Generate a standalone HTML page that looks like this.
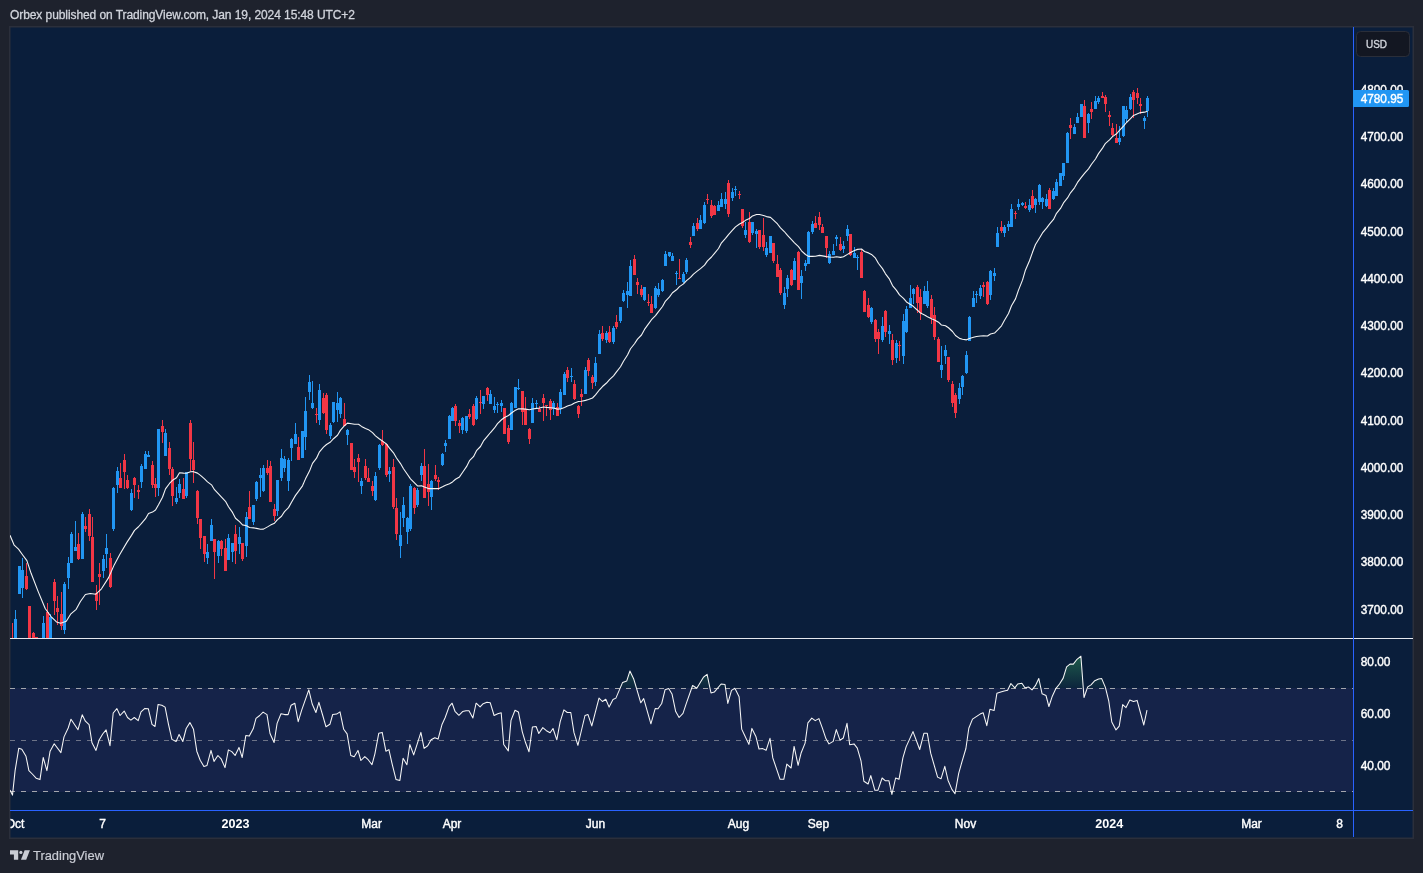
<!DOCTYPE html>
<html><head><meta charset="utf-8"><title>TradingView chart</title>
<style>
html,body{margin:0;padding:0;background:#1e222d;}
body{width:1423px;height:873px;overflow:hidden;position:relative;font-family:"Liberation Sans", sans-serif;}
#title{position:absolute;left:10px;top:8px;font-size:12px;line-height:14px;color:#d1d4dc;white-space:nowrap;letter-spacing:-0.08px;-webkit-text-stroke:0.3px #d1d4dc}
#brand{position:absolute;left:33px;top:847.6px;font-size:12.9px;line-height:16px;color:#c9ccd4;white-space:nowrap;-webkit-text-stroke:0.2px #c9ccd4}
svg{position:absolute;left:0;top:0;will-change:transform}
#title,#brand{will-change:transform}
svg text{font-family:"Liberation Sans", sans-serif;font-size:12.6px;fill:#fff;stroke:#fff;stroke-width:0.4px}
</style></head><body>
<div id="title">Orbex published on TradingView.com, Jan 19, 2024 15:48 UTC+2</div>
<svg width="1423" height="873" viewBox="0 0 1423 873">
<defs>
<clipPath id="cp"><rect x="10" y="27" width="1343" height="611"/></clipPath>
<clipPath id="ct"><rect x="10.5" y="811" width="1343" height="26"/></clipPath>
<clipPath id="cr"><rect x="10" y="639" width="1343" height="171"/></clipPath>
<clipPath id="c70"><rect x="10" y="639" width="1343" height="49.5"/></clipPath>
<linearGradient id="gg" x1="0" y1="652" x2="0" y2="688.5" gradientUnits="userSpaceOnUse"><stop offset="0" stop-color="#2e8b57" stop-opacity="0.62"/><stop offset="1" stop-color="#2e8b57" stop-opacity="0.05"/></linearGradient>
</defs>
<rect x="9" y="26" width="1405" height="813" fill="#2b2f3b"/>
<rect x="10.5" y="27.5" width="1402" height="810" fill="#0a1e3b"/>
<g shape-rendering="crispEdges">
<rect x="10" y="688" width="1343" height="104" fill="#152349"/>
<path d="M10 688.5H1353M10 791.5H1353" stroke="#a3a6ae" stroke-width="1" stroke-dasharray="5 6" fill="none"/>
<path d="M10 740.5H1353" stroke="#6d7387" stroke-width="1" stroke-dasharray="5 6" fill="none"/>
</g>
<g clip-path="url(#c70)"><polygon points="10.0,688.5 10.0,790.0 12.5,795.1 15.1,770.6 18.8,748.2 21.8,749.2 26.0,756.3 28.9,770.6 32.3,774.0 36.1,778.2 40.0,779.6 43.2,757.5 46.9,770.6 50.1,751.2 54.2,743.8 60.9,752.6 64.0,736.9 68.2,728.0 71.0,719.2 78.0,729.7 82.2,714.8 85.4,721.2 89.1,724.6 92.0,742.8 96.0,750.4 99.0,740.3 102.7,734.0 106.1,729.8 110.0,745.7 113.2,713.0 116.9,708.6 120.1,715.5 124.2,711.1 127.5,717.5 130.9,720.2 134.3,717.5 138.2,720.7 141.0,711.9 144.9,708.4 148.3,708.7 152.0,724.3 155.0,726.5 158.1,704.4 161.8,705.2 165.1,707.1 168.5,724.3 171.9,739.4 176.1,741.5 179.1,734.4 182.8,741.5 186.2,728.5 189.9,722.6 193.5,729.3 196.8,751.2 200.2,760.2 203.9,766.4 207.0,765.4 211.0,750.4 214.0,761.4 217.9,755.5 221.1,758.8 225.0,767.6 228.4,749.9 231.8,751.6 235.1,755.5 239.0,747.4 242.2,757.5 245.8,735.7 245.9,735.6 249.3,736.1 253.2,728.8 256.0,718.4 259.7,715.5 263.1,712.1 267.0,714.6 270.0,733.5 274.1,742.5 277.1,723.4 281.0,713.8 284.7,714.6 288.1,714.6 291.1,705.2 294.8,703.2 298.2,721.7 301.6,710.3 308.8,689.9 312.2,704.0 315.9,712.5 318.9,702.3 322.6,715.0 326.0,726.8 329.9,724.3 332.7,714.5 336.6,714.1 340.0,711.9 343.7,729.3 347.1,733.9 350.8,755.5 354.2,756.8 358.0,750.4 360.9,760.5 364.8,756.6 368.2,759.7 372.0,764.7 374.9,753.8 378.8,733.2 382.2,732.4 385.9,751.2 388.9,749.6 392.3,764.7 396.0,779.4 399.9,780.4 403.1,758.3 406.9,764.7 409.8,744.5 413.7,754.9 420.9,732.4 424.1,748.4 427.7,745.8 431.1,739.8 434.8,737.7 438.1,739.1 441.9,724.8 445.2,717.5 449.1,706.6 452.1,703.2 455.0,711.3 458.9,715.3 462.6,711.6 466.0,710.8 469.0,710.8 472.9,718.0 476.1,703.2 476.2,703.2 480.1,706.9 483.2,703.7 486.9,702.3 490.2,702.7 494.1,715.5 497.8,713.8 501.2,712.8 503.7,744.5 508.3,750.9 511.0,720.4 515.0,710.3 518.4,711.9 522.3,731.8 525.6,742.8 529.0,751.7 532.4,727.1 536.1,726.5 538.8,733.5 542.8,727.6 546.4,730.7 550.1,732.7 553.0,728.5 556.8,739.8 560.2,721.7 563.9,709.9 567.3,712.5 570.8,712.5 574.0,732.7 577.9,745.3 581.3,731.0 585.0,715.5 588.0,714.6 591.8,725.9 599.0,698.1 602.4,701.5 605.8,699.3 609.1,707.1 613.0,699.5 615.9,698.1 622.6,682.4 626.8,680.9 629.9,671.1 633.6,678.7 636.9,689.7 640.8,702.8 643.7,698.6 650.9,723.8 655.2,708.6 658.0,708.7 661.7,703.5 665.1,689.7 668.7,688.5 672.0,693.9 675.7,711.6 679.1,717.5 683.0,713.3 686.4,703.2 692.6,685.5 696.8,688.3 703.6,677.0 703.7,677.0 707.1,674.4 711.0,693.0 714.3,692.1 721.1,684.0 725.0,684.5 727.8,703.4 731.5,690.4 734.9,688.3 739.1,696.7 741.7,729.1 744.7,735.5 748.9,744.4 751.9,728.4 756.0,736.8 759.0,749.0 762.7,748.6 766.1,750.3 770.0,738.3 772.8,757.9 780.1,779.3 783.8,779.3 786.8,764.1 791.1,768.0 794.1,746.4 798.1,765.3 801.2,752.7 805.1,743.1 807.9,722.8 811.8,718.1 815.2,720.6 818.9,718.6 822.3,727.9 826.0,738.8 829.0,743.9 833.2,741.4 836.3,729.6 840.0,740.2 843.3,738.0 847.0,723.3 849.7,744.7 854.0,743.9 857.3,748.1 861.0,760.8 863.9,781.3 868.1,784.0 870.8,775.6 874.9,790.3 877.9,790.3 882.1,778.0 885.2,780.7 888.9,780.7 891.9,794.5 895.6,778.0 899.0,779.3 902.9,757.9 906.1,746.9 913.0,731.6 919.7,749.5 923.9,733.3 927.3,733.3 930.7,753.2 937.6,777.1 941.0,778.8 944.8,766.3 948.0,780.2 951.9,789.4 955.0,793.7 958.7,773.4 962.0,761.6 965.9,748.5 968.8,728.2 972.5,719.1 975.9,716.9 980.1,714.1 983.1,712.7 986.8,725.7 989.9,709.3 994.1,710.5 996.9,693.3 1000.8,692.0 1004.2,691.1 1007.6,690.3 1010.9,683.5 1014.8,687.9 1017.7,684.0 1021.9,683.2 1024.9,687.8 1028.7,687.1 1032.0,689.9 1035.4,685.7 1038.8,678.5 1042.1,693.8 1046.0,695.5 1048.9,706.5 1052.3,696.2 1056.0,688.3 1059.5,684.0 1063.2,678.1 1066.6,666.8 1070.0,664.1 1073.3,664.1 1077.0,659.3 1080.9,656.2 1084.0,697.5 1087.7,686.9 1091.0,684.9 1094.8,680.7 1098.6,679.0 1101.7,678.6 1105.4,687.4 1108.8,701.2 1111.8,722.0 1116.0,729.9 1119.2,726.2 1122.7,704.6 1126.0,707.6 1129.8,700.1 1133.5,701.4 1137.1,700.4 1143.8,725.0 1147.0,710.2 1147.0,688.5" fill="url(#gg)"/></g>
<g clip-path="url(#cp)">
<path d="M1074 124h1v10h-1zM1073 127h3v7h-3zM1077 113h1v10h-1zM1076 117h3v6h-3zM1081 104h1v13h-1zM1080 104h3v13h-3zM1088 113h1v20h-1zM1087 114h3v9h-3zM1095 96h1v13h-1zM1094 101h3v8h-3zM1098 96h1v8h-1zM1097 98h3v4h-3zM1119 126h1v19h-1zM1118 138h3v4h-3zM1123 106h1v31h-1zM1122 106h3v30h-3zM1126 106h1v16h-1zM1125 110h3v9h-3zM1130 94h1v16h-1zM1129 97h3v12h-3zM1144 116h1v13h-1zM1143 118h3v3h-3zM1147 96h1v21h-1zM1146 98h3v13h-3zM15 610h1v34h-1zM14 619h3v25h-3zM19 566h1v28h-1zM18 566h3v28h-3zM22 558h1v40h-1zM21 570h3v18h-3zM43 616h1v28h-1zM42 623h3v21h-3zM50 614h1v30h-1zM49 617h3v27h-3zM64 582h1v52h-1zM63 584h3v46h-3zM68 557h1v32h-1zM67 563h3v15h-3zM71 532h1v31h-1zM70 534h3v29h-3zM75 521h1v30h-1zM74 547h3v4h-3zM82 512h1v47h-1zM81 514h3v45h-3zM103 555h1v23h-1zM102 559h3v12h-3zM106 534h1v34h-1zM105 548h3v6h-3zM113 487h1v44h-1zM112 488h3v41h-3zM207 544h1v20h-1zM206 552h3v6h-3zM117 467h1v26h-1zM116 471h3v14h-3zM131 489h1v22h-1zM130 493h3v17h-3zM141 464h1v24h-1zM140 466h3v16h-3zM145 451h1v18h-1zM144 454h3v15h-3zM148 451h1v6h-1zM147 455h3v2h-3zM158 429h1v67h-1zM157 429h3v59h-3zM165 429h1v27h-1zM164 433h3v23h-3zM176 487h1v17h-1zM175 498h3v4h-3zM179 479h1v19h-1zM178 484h3v9h-3zM186 472h1v26h-1zM185 472h3v24h-3zM211 519h1v22h-1zM210 525h3v16h-3zM218 540h1v23h-1zM217 541h3v15h-3zM228 534h1v26h-1zM227 538h3v22h-3zM232 543h1v19h-1zM231 543h3v9h-3zM239 527h1v27h-1zM238 537h3v7h-3zM246 512h1v45h-1zM245 517h3v29h-3zM253 505h1v20h-1zM252 505h3v17h-3zM256 481h1v20h-1zM255 482h3v17h-3zM260 468h1v29h-1zM259 475h3v3h-3zM263 465h1v27h-1zM262 468h3v23h-3zM277 480h1v36h-1zM276 480h3v31h-3zM281 449h1v32h-1zM280 458h3v20h-3zM284 456h1v16h-1zM283 459h3v9h-3zM288 458h1v33h-1zM287 460h3v21h-3zM361 478h1v16h-1zM360 481h3v5h-3zM375 472h1v29h-1zM374 476h3v24h-3zM379 444h1v26h-1zM378 445h3v23h-3zM389 467h1v15h-1zM388 471h3v3h-3zM291 438h1v23h-1zM290 439h3v9h-3zM295 423h1v21h-1zM294 434h3v10h-3zM302 431h1v27h-1zM301 431h3v27h-3zM305 397h1v53h-1zM304 411h3v26h-3zM309 375h1v25h-1zM308 382h3v10h-3zM312 381h1v28h-1zM311 403h3v5h-3zM319 384h1v41h-1zM318 390h3v30h-3zM330 423h1v16h-1zM329 425h3v11h-3zM333 402h1v21h-1zM332 402h3v20h-3zM337 392h1v30h-1zM336 403h3v7h-3zM340 397h1v21h-1zM339 398h3v16h-3zM347 429h1v16h-1zM346 430h3v5h-3zM400 512h1v46h-1zM399 535h3v11h-3zM403 497h1v30h-1zM402 505h3v13h-3zM407 517h1v27h-1zM406 518h3v14h-3zM410 484h1v47h-1zM409 486h3v43h-3zM417 488h1v19h-1zM416 490h3v15h-3zM421 463h1v18h-1zM420 466h3v9h-3zM431 480h1v30h-1zM430 481h3v16h-3zM442 453h1v13h-1zM441 454h3v11h-3zM445 440h1v12h-1zM444 443h3v3h-3zM449 415h1v24h-1zM448 416h3v23h-3zM452 407h1v14h-1zM451 408h3v13h-3zM462 417h1v17h-1zM461 418h3v12h-3zM466 416h1v17h-1zM465 416h3v15h-3zM476 396h1v24h-1zM475 398h3v21h-3zM483 396h1v13h-1zM482 396h3v8h-3zM490 390h1v14h-1zM489 394h3v10h-3zM494 397h1v16h-1zM493 406h3v4h-3zM497 402h1v11h-1zM496 404h3v1h-3zM501 400h1v12h-1zM500 403h3v3h-3zM511 402h1v28h-1zM510 403h3v27h-3zM515 387h1v21h-1zM514 387h3v21h-3zM518 379h1v11h-1zM517 388h3v1h-3zM532 398h1v25h-1zM531 403h3v20h-3zM536 400h1v9h-1zM535 403h3v1h-3zM553 401h1v14h-1zM552 403h3v6h-3zM560 389h1v25h-1zM559 392h3v17h-3zM564 372h1v23h-1zM563 374h3v21h-3zM571 368h1v14h-1zM570 376h3v1h-3zM585 367h1v27h-1zM584 370h3v24h-3zM595 357h1v29h-1zM594 363h3v19h-3zM599 330h1v24h-1zM598 334h3v20h-3zM606 331h1v12h-1zM605 333h3v7h-3zM613 326h1v18h-1zM612 328h3v14h-3zM620 307h1v16h-1zM619 307h3v14h-3zM623 290h1v12h-1zM622 293h3v8h-3zM627 282h1v26h-1zM626 291h3v4h-3zM630 260h1v36h-1zM629 266h3v30h-3zM644 287h1v14h-1zM643 287h3v13h-3zM655 286h1v23h-1zM654 288h3v20h-3zM658 283h1v14h-1zM657 289h3v6h-3zM662 279h1v13h-1zM661 280h3v11h-3zM665 251h1v15h-1zM664 254h3v12h-3zM669 252h1v5h-1zM668 252h3v4h-3zM672 253h1v8h-1zM671 256h3v5h-3zM676 271h1v14h-1zM675 273h3v1h-3zM683 272h1v11h-1zM682 274h3v8h-3zM686 258h1v16h-1zM685 260h3v12h-3zM693 223h1v13h-1zM692 226h3v10h-3zM700 215h1v14h-1zM699 220h3v9h-3zM704 202h1v22h-1zM703 205h3v18h-3zM718 201h1v10h-1zM717 205h3v6h-3zM721 193h1v14h-1zM720 199h3v8h-3zM725 192h1v17h-1zM724 199h3v5h-3zM732 188h1v13h-1zM731 192h3v6h-3zM735 186h1v10h-1zM734 189h3v1h-3zM745 222h1v16h-1zM744 230h3v5h-3zM752 222h1v13h-1zM751 222h3v11h-3zM756 229h1v19h-1zM755 231h3v3h-3zM766 242h1v15h-1zM765 248h3v7h-3zM770 236h1v17h-1zM769 236h3v17h-3zM784 287h1v22h-1zM783 293h3v12h-3zM787 275h1v22h-1zM786 278h3v11h-3zM794 258h1v22h-1zM793 261h3v19h-3zM801 270h1v29h-1zM800 276h3v7h-3zM805 260h1v11h-1zM804 263h3v3h-3zM808 231h1v33h-1zM807 232h3v32h-3zM812 221h1v13h-1zM811 224h3v8h-3zM829 251h1v13h-1zM828 254h3v9h-3zM833 244h1v11h-1zM832 251h3v4h-3zM836 235h1v11h-1zM835 237h3v2h-3zM843 241h1v12h-1zM842 246h3v3h-3zM847 225h1v16h-1zM846 229h3v7h-3zM854 247h1v11h-1zM853 253h3v5h-3zM857 255h1v15h-1zM856 257h3v1h-3zM910 285h1v23h-1zM909 298h3v10h-3zM913 288h1v16h-1zM912 289h3v5h-3zM924 286h1v18h-1zM923 291h3v13h-3zM927 281h1v27h-1zM926 291h3v15h-3zM871 307h1v17h-1zM870 308h3v14h-3zM882 317h1v25h-1zM881 326h3v14h-3zM889 325h1v19h-1zM888 331h3v3h-3zM896 340h1v23h-1zM895 343h3v15h-3zM903 314h1v50h-1zM902 321h3v35h-3zM906 306h1v27h-1zM905 309h3v23h-3zM941 346h1v32h-1zM940 365h3v5h-3zM945 345h1v19h-1zM944 350h3v6h-3zM959 383h1v21h-1zM958 388h3v11h-3zM962 375h1v20h-1zM961 376h3v11h-3zM966 351h1v23h-1zM965 355h3v18h-3zM969 316h1v25h-1zM968 317h3v24h-3zM973 291h1v16h-1zM972 298h3v9h-3zM976 291h1v12h-1zM975 294h3v1h-3zM980 285h1v14h-1zM979 288h3v8h-3zM990 270h1v30h-1zM989 271h3v24h-3zM994 268h1v13h-1zM993 273h3v3h-3zM997 227h1v20h-1zM996 233h3v14h-3zM1004 225h1v12h-1zM1003 227h3v6h-3zM1008 221h1v10h-1zM1007 224h3v3h-3zM1011 204h1v23h-1zM1010 209h3v18h-3zM1018 199h1v11h-1zM1017 204h3v3h-3zM1022 202h1v4h-1zM1021 203h3v2h-3zM1029 199h1v13h-1zM1028 205h3v5h-3zM1035 198h1v15h-1zM1034 199h3v6h-3zM1039 184h1v21h-1zM1038 185h3v17h-3zM1042 197h1v12h-1zM1041 198h3v4h-3zM1046 194h1v13h-1zM1045 199h3v7h-3zM1053 188h1v12h-1zM1052 191h3v8h-3zM1056 179h1v17h-1zM1055 182h3v14h-3zM1060 173h1v13h-1zM1059 173h3v13h-3zM1063 163h1v17h-1zM1062 163h3v13h-3zM1067 132h1v31h-1zM1066 133h3v30h-3z" fill="#2196f3" shape-rendering="crispEdges"/>
<path d="M1070 118h1v21h-1zM1069 125h3v3h-3zM1084 100h1v38h-1zM1083 106h3v32h-3zM1091 102h1v17h-1zM1090 109h3v3h-3zM1102 92h1v6h-1zM1101 96h3v2h-3zM1105 95h1v17h-1zM1104 97h3v7h-3zM1109 111h1v15h-1zM1108 115h3v2h-3zM1112 123h1v14h-1zM1111 128h3v7h-3zM1116 124h1v19h-1zM1115 138h3v5h-3zM1133 90h1v28h-1zM1132 92h3v8h-3zM1137 88h1v16h-1zM1136 93h3v5h-3zM1140 98h1v16h-1zM1139 104h3v2h-3zM12 623h1v21h-1zM11 644h3v1h-3zM26 563h1v27h-1zM25 576h3v13h-3zM29 606h1v38h-1zM28 606h3v38h-3zM33 632h1v12h-1zM32 633h3v11h-3zM36 637h1v7h-1zM35 637h3v7h-3zM47 603h1v41h-1zM46 612h3v32h-3zM54 579h1v36h-1zM53 582h3v19h-3zM57 596h1v29h-1zM56 608h3v4h-3zM61 592h1v38h-1zM60 614h3v12h-3zM96 585h1v25h-1zM95 593h3v8h-3zM78 533h1v27h-1zM77 544h3v15h-3zM85 517h1v15h-1zM84 526h3v3h-3zM89 509h1v32h-1zM88 514h3v22h-3zM92 517h1v65h-1zM91 537h3v45h-3zM99 563h1v42h-1zM98 574h3v3h-3zM110 553h1v35h-1zM109 558h3v29h-3zM197 490h1v34h-1zM196 491h3v27h-3zM200 519h1v30h-1zM199 519h3v19h-3zM204 536h1v26h-1zM203 536h3v18h-3zM120 463h1v25h-1zM119 478h3v10h-3zM124 454h1v35h-1zM123 460h3v12h-3zM127 475h1v14h-1zM126 480h3v8h-3zM134 477h1v21h-1zM133 478h3v7h-3zM138 485h1v14h-1zM137 490h3v2h-3zM152 461h1v27h-1zM151 465h3v20h-3zM155 478h1v19h-1zM154 484h3v4h-3zM162 420h1v23h-1zM161 426h3v6h-3zM169 442h1v33h-1zM168 448h3v21h-3zM172 467h1v39h-1zM171 469h3v27h-3zM183 478h1v21h-1zM182 489h3v10h-3zM190 420h1v51h-1zM189 423h3v36h-3zM193 442h1v41h-1zM192 460h3v10h-3zM214 539h1v40h-1zM213 539h3v13h-3zM221 540h1v16h-1zM220 541h3v8h-3zM225 539h1v32h-1zM224 548h3v23h-3zM235 525h1v39h-1zM234 534h3v17h-3zM242 543h1v18h-1zM241 543h3v16h-3zM249 491h1v28h-1zM248 507h3v12h-3zM267 460h1v15h-1zM266 468h3v5h-3zM270 461h1v41h-1zM269 466h3v36h-3zM274 504h1v17h-1zM273 509h3v7h-3zM351 443h1v27h-1zM350 443h3v27h-3zM354 459h1v19h-1zM353 467h3v5h-3zM358 454h1v28h-1zM357 458h3v4h-3zM365 459h1v21h-1zM364 466h3v12h-3zM368 468h1v14h-1zM367 478h3v4h-3zM372 481h1v15h-1zM371 486h3v5h-3zM386 444h1v33h-1zM385 444h3v31h-3zM393 459h1v50h-1zM392 467h3v40h-3zM396 498h1v42h-1zM395 508h3v26h-3zM298 437h1v23h-1zM297 447h3v13h-3zM316 408h1v15h-1zM315 414h3v1h-3zM323 393h1v21h-1zM322 398h3v15h-3zM326 393h1v41h-1zM325 395h3v35h-3zM344 403h1v23h-1zM343 419h3v7h-3zM382 430h1v16h-1zM381 441h3v4h-3zM414 487h1v27h-1zM413 488h3v20h-3zM424 449h1v49h-1zM423 466h3v32h-3zM428 464h1v42h-1zM427 484h3v8h-3zM435 465h1v16h-1zM434 475h3v4h-3zM438 477h1v13h-1zM437 480h3v2h-3zM455 404h1v22h-1zM454 406h3v15h-3zM459 420h1v13h-1zM458 423h3v3h-3zM469 409h1v10h-1zM468 414h3v3h-3zM473 404h1v22h-1zM472 406h3v19h-3zM480 390h1v24h-1zM479 402h3v1h-3zM487 387h1v14h-1zM486 388h3v7h-3zM504 408h1v26h-1zM503 408h3v26h-3zM508 425h1v19h-1zM507 428h3v14h-3zM522 391h1v34h-1zM521 391h3v21h-3zM525 397h1v28h-1zM524 409h3v16h-3zM529 428h1v16h-1zM528 429h3v10h-3zM539 406h1v6h-1zM538 409h3v3h-3zM543 394h1v27h-1zM542 398h3v5h-3zM546 405h1v11h-1zM545 405h3v1h-3zM550 399h1v21h-1zM549 401h3v9h-3zM557 403h1v13h-1zM556 407h3v9h-3zM567 367h1v15h-1zM566 370h3v8h-3zM574 380h1v20h-1zM573 384h3v15h-3zM578 405h1v13h-1zM577 406h3v8h-3zM581 389h1v17h-1zM580 394h3v3h-3zM588 358h1v18h-1zM587 360h3v11h-3zM592 375h1v14h-1zM591 377h3v6h-3zM602 326h1v15h-1zM601 333h3v6h-3zM609 326h1v17h-1zM608 332h3v10h-3zM616 315h1v14h-1zM615 322h3v5h-3zM637 278h1v16h-1zM636 282h3v3h-3zM641 285h1v12h-1zM640 289h3v6h-3zM648 294h1v12h-1zM647 302h3v1h-3zM651 296h1v17h-1zM650 304h3v9h-3zM634 255h1v20h-1zM633 259h3v16h-3zM679 259h1v20h-1zM678 278h3v1h-3zM690 237h1v11h-1zM689 242h3v3h-3zM697 218h1v13h-1zM696 223h3v6h-3zM707 194h1v10h-1zM706 199h3v1h-3zM711 200h1v18h-1zM710 205h3v11h-3zM714 205h1v10h-1zM713 206h3v9h-3zM728 180h1v37h-1zM727 183h3v31h-3zM739 191h1v8h-1zM738 194h3v1h-3zM742 209h1v19h-1zM741 209h3v17h-3zM749 212h1v31h-1zM748 222h3v20h-3zM759 230h1v19h-1zM758 230h3v17h-3zM763 218h1v33h-1zM762 235h3v12h-3zM773 243h1v20h-1zM772 243h3v18h-3zM777 255h1v22h-1zM776 264h3v13h-3zM780 268h1v27h-1zM779 270h3v23h-3zM791 269h1v17h-1zM790 270h3v15h-3zM798 251h1v39h-1zM797 252h3v38h-3zM815 216h1v12h-1zM814 223h3v5h-3zM819 212h1v18h-1zM818 217h3v8h-3zM822 224h1v9h-1zM821 227h3v6h-3zM826 236h1v22h-1zM825 236h3v12h-3zM840 237h1v14h-1zM839 244h3v6h-3zM850 234h1v22h-1zM849 234h3v21h-3zM861 249h1v29h-1zM860 252h3v26h-3zM864 290h1v22h-1zM863 291h3v21h-3zM917 285h1v28h-1zM916 287h3v16h-3zM920 289h1v31h-1zM919 297h3v16h-3zM868 298h1v20h-1zM867 305h3v12h-3zM875 319h1v23h-1zM874 320h3v19h-3zM878 329h1v25h-1zM877 332h3v7h-3zM885 310h1v27h-1zM884 311h3v21h-3zM892 334h1v31h-1zM891 340h3v20h-3zM899 341h1v20h-1zM898 345h3v1h-3zM931 295h1v29h-1zM930 299h3v19h-3zM934 307h1v33h-1zM933 315h3v22h-3zM938 337h1v25h-1zM937 339h3v23h-3zM948 357h1v25h-1zM947 357h3v23h-3zM952 381h1v26h-1zM951 384h3v19h-3zM955 393h1v25h-1zM954 395h3v18h-3zM983 282h1v15h-1zM982 285h3v2h-3zM987 281h1v24h-1zM986 282h3v22h-3zM1001 221h1v12h-1zM1000 227h3v4h-3zM1015 211h1v8h-1zM1014 213h3v1h-3zM1025 202h1v7h-1zM1024 206h3v2h-3zM1032 190h1v19h-1zM1031 196h3v12h-3zM1049 188h1v21h-1zM1048 190h3v19h-3z" fill="#f23645" shape-rendering="crispEdges"/>
<polyline points="10.0,535.3 14.2,545.2 18.5,549.1 22.7,555.0 26.9,560.7 31.1,573.3 38.2,591.6 45.2,608.5 50.8,616.3 56.5,621.9 60.7,623.3 66.3,621.2 70.6,614.2 76.2,609.3 80.4,601.5 85.4,594.5 90.3,593.5 95.9,594.2 101.5,588.8 108.6,577.6 114.2,564.9 119.9,554.3 126.9,542.4 131.5,535.38 134.5,530.37 138.5,526.76 141.5,523.37 145.5,518.72 148.5,513.56 152.5,512.08 155.5,510.02 158.5,504.73 162.5,497.23 165.5,488.88 169.5,483.48 172.5,480.28 176.5,477.78 179.5,472.68 183.5,473.15 186.5,473.21 190.5,471.77 193.5,471.66 197.5,473.14 200.5,475.34 204.5,478.8 207.5,481.88 211.5,484.83 214.5,489.68 218.5,493.99 221.5,497.18 225.5,501.32 228.5,506.79 232.5,512.4 235.5,518.24 239.5,521.7 242.5,524.85 246.5,525.8 249.5,527.5 253.5,527.87 256.5,528.36 260.5,529.2 263.5,529.14 267.5,526.89 270.5,525.1 274.5,523.21 277.5,519.59 281.5,516.25 284.5,511.66 288.5,507.62 291.5,502.18 295.5,495.39 298.5,491.42 302.5,485.81 305.5,478.86 309.5,471.11 312.5,463.36 316.5,458.21 319.5,451.81 323.5,447.15 326.5,444.49 330.5,442.0 333.5,438.71 337.5,435.27 340.5,430.13 344.5,425.62 347.5,423.14 351.5,423.68 354.5,424.28 358.5,424.32 361.5,426.42 365.5,428.55 368.5,429.66 372.5,432.62 375.5,435.87 379.5,439.02 382.5,441.07 386.5,444.06 389.5,448.13 393.5,452.84 396.5,458.05 400.5,463.56 403.5,468.71 407.5,474.45 410.5,478.84 414.5,482.95 417.5,485.94 421.5,485.8 424.5,487.1 428.5,488.58 431.5,488.59 435.5,488.66 438.5,488.67 442.5,486.85 445.5,485.19 449.5,483.74 452.5,481.94 455.5,479.25 459.5,476.92 462.5,472.52 466.5,466.67 469.5,460.72 473.5,456.68 476.5,450.69 480.5,446.5 483.5,440.94 487.5,436.13 490.5,432.52 494.5,427.98 497.5,423.64 501.5,419.75 504.5,417.5 508.5,415.5 511.5,412.96 515.5,410.17 518.5,408.76 522.5,408.9 525.5,409.1 529.5,409.75 532.5,409.0 536.5,408.35 539.5,408.09 543.5,407.0 546.5,407.35 550.5,407.7 553.5,408.06 557.5,409.11 560.5,409.02 564.5,407.41 567.5,406.06 571.5,404.7 574.5,402.96 578.5,401.55 581.5,401.2 585.5,400.35 588.5,399.46 592.5,398.0 595.5,394.96 599.5,389.77 602.5,386.52 606.5,383.02 609.5,379.53 613.5,375.83 616.5,371.87 620.5,366.77 623.5,361.27 627.5,355.07 630.5,348.76 634.5,343.76 637.5,339.09 641.5,335.0 644.5,329.44 648.5,323.9 651.5,319.7 655.5,315.61 658.5,311.56 662.5,306.47 665.5,301.02 669.5,296.91 672.5,292.8 676.5,289.79 679.5,286.62 683.5,283.91 686.5,280.58 690.5,277.44 693.5,274.07 697.5,270.93 700.5,268.63 704.5,265.19 707.5,260.94 711.5,257.0 714.5,253.35 718.5,248.49 721.5,242.83 725.5,238.37 728.5,234.57 732.5,230.17 735.5,226.91 739.5,224.01 742.5,222.46 745.5,220.33 749.5,218.48 752.5,215.9 756.5,214.46 759.5,214.57 763.5,215.59 766.5,216.59 770.5,217.38 773.5,220.13 777.5,223.97 780.5,227.82 784.5,231.77 787.5,235.42 791.5,239.68 794.5,242.78 798.5,246.57 801.5,250.78 805.5,254.49 808.5,256.4 812.5,256.36 815.5,256.19 819.5,255.35 822.5,255.86 826.5,256.65 829.5,257.05 833.5,257.29 836.5,256.73 840.5,257.39 843.5,256.69 847.5,254.35 850.5,252.44 854.5,250.43 857.5,249.38 861.5,249.03 864.5,251.53 868.5,252.89 871.5,254.47 875.5,258.21 878.5,263.51 882.5,268.62 885.5,273.83 889.5,279.19 892.5,285.53 896.5,290.33 899.5,294.88 903.5,298.37 906.5,301.97 910.5,304.41 913.5,306.57 917.5,310.22 920.5,313.11 924.5,315.01 927.5,316.71 931.5,318.73 934.5,319.97 938.5,322.22 941.5,325.08 945.5,325.68 948.5,327.73 952.5,331.51 955.5,335.54 959.5,338.39 962.5,339.25 966.5,339.85 969.5,338.45 973.5,337.31 976.5,336.56 980.5,336.07 983.5,335.92 987.5,335.97 990.5,333.93 994.5,333.03 997.5,330.12 1001.5,325.76 1004.5,320.32 1008.5,313.47 1011.5,305.68 1015.5,298.85 1018.5,290.1 1022.5,280.16 1025.5,269.93 1029.5,260.77 1032.5,252.32 1035.5,244.52 1039.5,237.93 1042.5,232.93 1046.5,228.17 1049.5,224.16 1053.5,219.41 1056.5,213.35 1060.5,208.46 1063.5,202.96 1067.5,197.96 1070.5,192.81 1074.5,187.81 1077.5,182.45 1081.5,177.19 1084.5,173.37 1088.5,168.87 1091.5,164.28 1095.5,158.97 1098.5,153.61 1102.5,148.1 1105.5,143.3 1109.5,139.85 1112.5,136.66 1116.5,133.81 1119.5,130.32 1123.5,126.08 1126.5,122.49 1130.5,118.69 1133.5,115.49 1137.5,113.7 1140.5,112.6 1144.5,112.15 1147.5,111.2" fill="none" stroke="#f4f4f4" stroke-width="1.1" stroke-linejoin="round"/>
</g>
<g clip-path="url(#cr)"><polyline points="10.0,790.0 12.5,795.1 15.1,770.6 18.8,748.2 21.8,749.2 26.0,756.3 28.9,770.6 32.3,774.0 36.1,778.2 40.0,779.6 43.2,757.5 46.9,770.6 50.1,751.2 54.2,743.8 60.9,752.6 64.0,736.9 68.2,728.0 71.0,719.2 78.0,729.7 82.2,714.8 85.4,721.2 89.1,724.6 92.0,742.8 96.0,750.4 99.0,740.3 102.7,734.0 106.1,729.8 110.0,745.7 113.2,713.0 116.9,708.6 120.1,715.5 124.2,711.1 127.5,717.5 130.9,720.2 134.3,717.5 138.2,720.7 141.0,711.9 144.9,708.4 148.3,708.7 152.0,724.3 155.0,726.5 158.1,704.4 161.8,705.2 165.1,707.1 168.5,724.3 171.9,739.4 176.1,741.5 179.1,734.4 182.8,741.5 186.2,728.5 189.9,722.6 193.5,729.3 196.8,751.2 200.2,760.2 203.9,766.4 207.0,765.4 211.0,750.4 214.0,761.4 217.9,755.5 221.1,758.8 225.0,767.6 228.4,749.9 231.8,751.6 235.1,755.5 239.0,747.4 242.2,757.5 245.8,735.7 245.9,735.6 249.3,736.1 253.2,728.8 256.0,718.4 259.7,715.5 263.1,712.1 267.0,714.6 270.0,733.5 274.1,742.5 277.1,723.4 281.0,713.8 284.7,714.6 288.1,714.6 291.1,705.2 294.8,703.2 298.2,721.7 301.6,710.3 308.8,689.9 312.2,704.0 315.9,712.5 318.9,702.3 322.6,715.0 326.0,726.8 329.9,724.3 332.7,714.5 336.6,714.1 340.0,711.9 343.7,729.3 347.1,733.9 350.8,755.5 354.2,756.8 358.0,750.4 360.9,760.5 364.8,756.6 368.2,759.7 372.0,764.7 374.9,753.8 378.8,733.2 382.2,732.4 385.9,751.2 388.9,749.6 392.3,764.7 396.0,779.4 399.9,780.4 403.1,758.3 406.9,764.7 409.8,744.5 413.7,754.9 420.9,732.4 424.1,748.4 427.7,745.8 431.1,739.8 434.8,737.7 438.1,739.1 441.9,724.8 445.2,717.5 449.1,706.6 452.1,703.2 455.0,711.3 458.9,715.3 462.6,711.6 466.0,710.8 469.0,710.8 472.9,718.0 476.1,703.2 476.2,703.2 480.1,706.9 483.2,703.7 486.9,702.3 490.2,702.7 494.1,715.5 497.8,713.8 501.2,712.8 503.7,744.5 508.3,750.9 511.0,720.4 515.0,710.3 518.4,711.9 522.3,731.8 525.6,742.8 529.0,751.7 532.4,727.1 536.1,726.5 538.8,733.5 542.8,727.6 546.4,730.7 550.1,732.7 553.0,728.5 556.8,739.8 560.2,721.7 563.9,709.9 567.3,712.5 570.8,712.5 574.0,732.7 577.9,745.3 581.3,731.0 585.0,715.5 588.0,714.6 591.8,725.9 599.0,698.1 602.4,701.5 605.8,699.3 609.1,707.1 613.0,699.5 615.9,698.1 622.6,682.4 626.8,680.9 629.9,671.1 633.6,678.7 636.9,689.7 640.8,702.8 643.7,698.6 650.9,723.8 655.2,708.6 658.0,708.7 661.7,703.5 665.1,689.7 668.7,688.5 672.0,693.9 675.7,711.6 679.1,717.5 683.0,713.3 686.4,703.2 692.6,685.5 696.8,688.3 703.6,677.0 703.7,677.0 707.1,674.4 711.0,693.0 714.3,692.1 721.1,684.0 725.0,684.5 727.8,703.4 731.5,690.4 734.9,688.3 739.1,696.7 741.7,729.1 744.7,735.5 748.9,744.4 751.9,728.4 756.0,736.8 759.0,749.0 762.7,748.6 766.1,750.3 770.0,738.3 772.8,757.9 780.1,779.3 783.8,779.3 786.8,764.1 791.1,768.0 794.1,746.4 798.1,765.3 801.2,752.7 805.1,743.1 807.9,722.8 811.8,718.1 815.2,720.6 818.9,718.6 822.3,727.9 826.0,738.8 829.0,743.9 833.2,741.4 836.3,729.6 840.0,740.2 843.3,738.0 847.0,723.3 849.7,744.7 854.0,743.9 857.3,748.1 861.0,760.8 863.9,781.3 868.1,784.0 870.8,775.6 874.9,790.3 877.9,790.3 882.1,778.0 885.2,780.7 888.9,780.7 891.9,794.5 895.6,778.0 899.0,779.3 902.9,757.9 906.1,746.9 913.0,731.6 919.7,749.5 923.9,733.3 927.3,733.3 930.7,753.2 937.6,777.1 941.0,778.8 944.8,766.3 948.0,780.2 951.9,789.4 955.0,793.7 958.7,773.4 962.0,761.6 965.9,748.5 968.8,728.2 972.5,719.1 975.9,716.9 980.1,714.1 983.1,712.7 986.8,725.7 989.9,709.3 994.1,710.5 996.9,693.3 1000.8,692.0 1004.2,691.1 1007.6,690.3 1010.9,683.5 1014.8,687.9 1017.7,684.0 1021.9,683.2 1024.9,687.8 1028.7,687.1 1032.0,689.9 1035.4,685.7 1038.8,678.5 1042.1,693.8 1046.0,695.5 1048.9,706.5 1052.3,696.2 1056.0,688.3 1059.5,684.0 1063.2,678.1 1066.6,666.8 1070.0,664.1 1073.3,664.1 1077.0,659.3 1080.9,656.2 1084.0,697.5 1087.7,686.9 1091.0,684.9 1094.8,680.7 1098.6,679.0 1101.7,678.6 1105.4,687.4 1108.8,701.2 1111.8,722.0 1116.0,729.9 1119.2,726.2 1122.7,704.6 1126.0,707.6 1129.8,700.1 1133.5,701.4 1137.1,700.4 1143.8,725.0 1147.0,710.2" fill="none" stroke="#f6f6f6" stroke-width="1.05" stroke-linejoin="round"/></g>
<g shape-rendering="crispEdges">
<rect x="10" y="638" width="1403" height="1" fill="#e6e8ee"/>
<rect x="10" y="810" width="1403" height="1" fill="#2962ff"/>
<rect x="1353" y="27" width="1" height="810" fill="#2962ff"/>
</g>
<g><text x="1360.7" y="613.5" textLength="42.6" lengthAdjust="spacingAndGlyphs">3700.00</text><text x="1360.7" y="566.2" textLength="42.6" lengthAdjust="spacingAndGlyphs">3800.00</text><text x="1360.7" y="519.0" textLength="42.6" lengthAdjust="spacingAndGlyphs">3900.00</text><text x="1360.7" y="471.8" textLength="42.6" lengthAdjust="spacingAndGlyphs">4000.00</text><text x="1360.7" y="424.5" textLength="42.6" lengthAdjust="spacingAndGlyphs">4100.00</text><text x="1360.7" y="377.2" textLength="42.6" lengthAdjust="spacingAndGlyphs">4200.00</text><text x="1360.7" y="330.0" textLength="42.6" lengthAdjust="spacingAndGlyphs">4300.00</text><text x="1360.7" y="282.8" textLength="42.6" lengthAdjust="spacingAndGlyphs">4400.00</text><text x="1360.7" y="235.5" textLength="42.6" lengthAdjust="spacingAndGlyphs">4500.00</text><text x="1360.7" y="188.2" textLength="42.6" lengthAdjust="spacingAndGlyphs">4600.00</text><text x="1360.7" y="141.0" textLength="42.6" lengthAdjust="spacingAndGlyphs">4700.00</text><text x="1360.7" y="93.8" textLength="42.6" lengthAdjust="spacingAndGlyphs">4800.00</text><text x="1360.7" y="665.7" textLength="29.8" lengthAdjust="spacingAndGlyphs">80.00</text><text x="1360.7" y="717.8" textLength="29.8" lengthAdjust="spacingAndGlyphs">60.00</text><text x="1360.7" y="769.8" textLength="29.8" lengthAdjust="spacingAndGlyphs">40.00</text><text x="102.5" y="828" text-anchor="middle" style="font-size:12px">7</text><text x="235.6" y="828" text-anchor="middle" font-weight="bold" style="stroke-width:0">2023</text><text x="371.7" y="828" text-anchor="middle" style="font-size:12px">Mar</text><text x="452" y="828" text-anchor="middle" style="font-size:12px">Apr</text><text x="595.5" y="828" text-anchor="middle" style="font-size:12px">Jun</text><text x="738.5" y="828" text-anchor="middle" style="font-size:12px">Aug</text><text x="818.5" y="828" text-anchor="middle" style="font-size:12px">Sep</text><text x="965.5" y="828" text-anchor="middle" style="font-size:12px">Nov</text><text x="1109.2" y="828" text-anchor="middle" font-weight="bold" style="stroke-width:0">2024</text><text x="1251.5" y="828" text-anchor="middle" style="font-size:12px">Mar</text><text x="1339.5" y="828" text-anchor="middle" style="font-size:12px">8</text></g>
<g clip-path="url(#ct)"><text x="24.3" y="828" text-anchor="end" style="font-size:12px">Oct</text></g>
<path d="M1353 90h54.5a1.5 1.5 0 0 1 1.5 1.5v14a1.5 1.5 0 0 1 -1.5 1.5h-54.5z" fill="#2196f3"/>
<text x="1360.7" y="102.7" textLength="42.6" lengthAdjust="spacingAndGlyphs">4780.95</text>
<rect x="1356.5" y="31.5" width="53" height="25" rx="4" fill="#131722" stroke="#2a2e39"/>
<text x="1366" y="48.4" style="fill:#d1d4dc;stroke:#d1d4dc;font-size:11.6px" textLength="21" lengthAdjust="spacingAndGlyphs">USD</text>
<g fill="#c9ccd4"><path d="M10 850.3h8.2v9.5h-4.3v-5.3h-3.9z"/><circle cx="20.9" cy="852.4" r="1.6"/><path d="M24.6 850.3h5.3l-3.7 9.5h-5.2z"/></g>
</svg>
<div id="brand">TradingView</div>
</body></html>
